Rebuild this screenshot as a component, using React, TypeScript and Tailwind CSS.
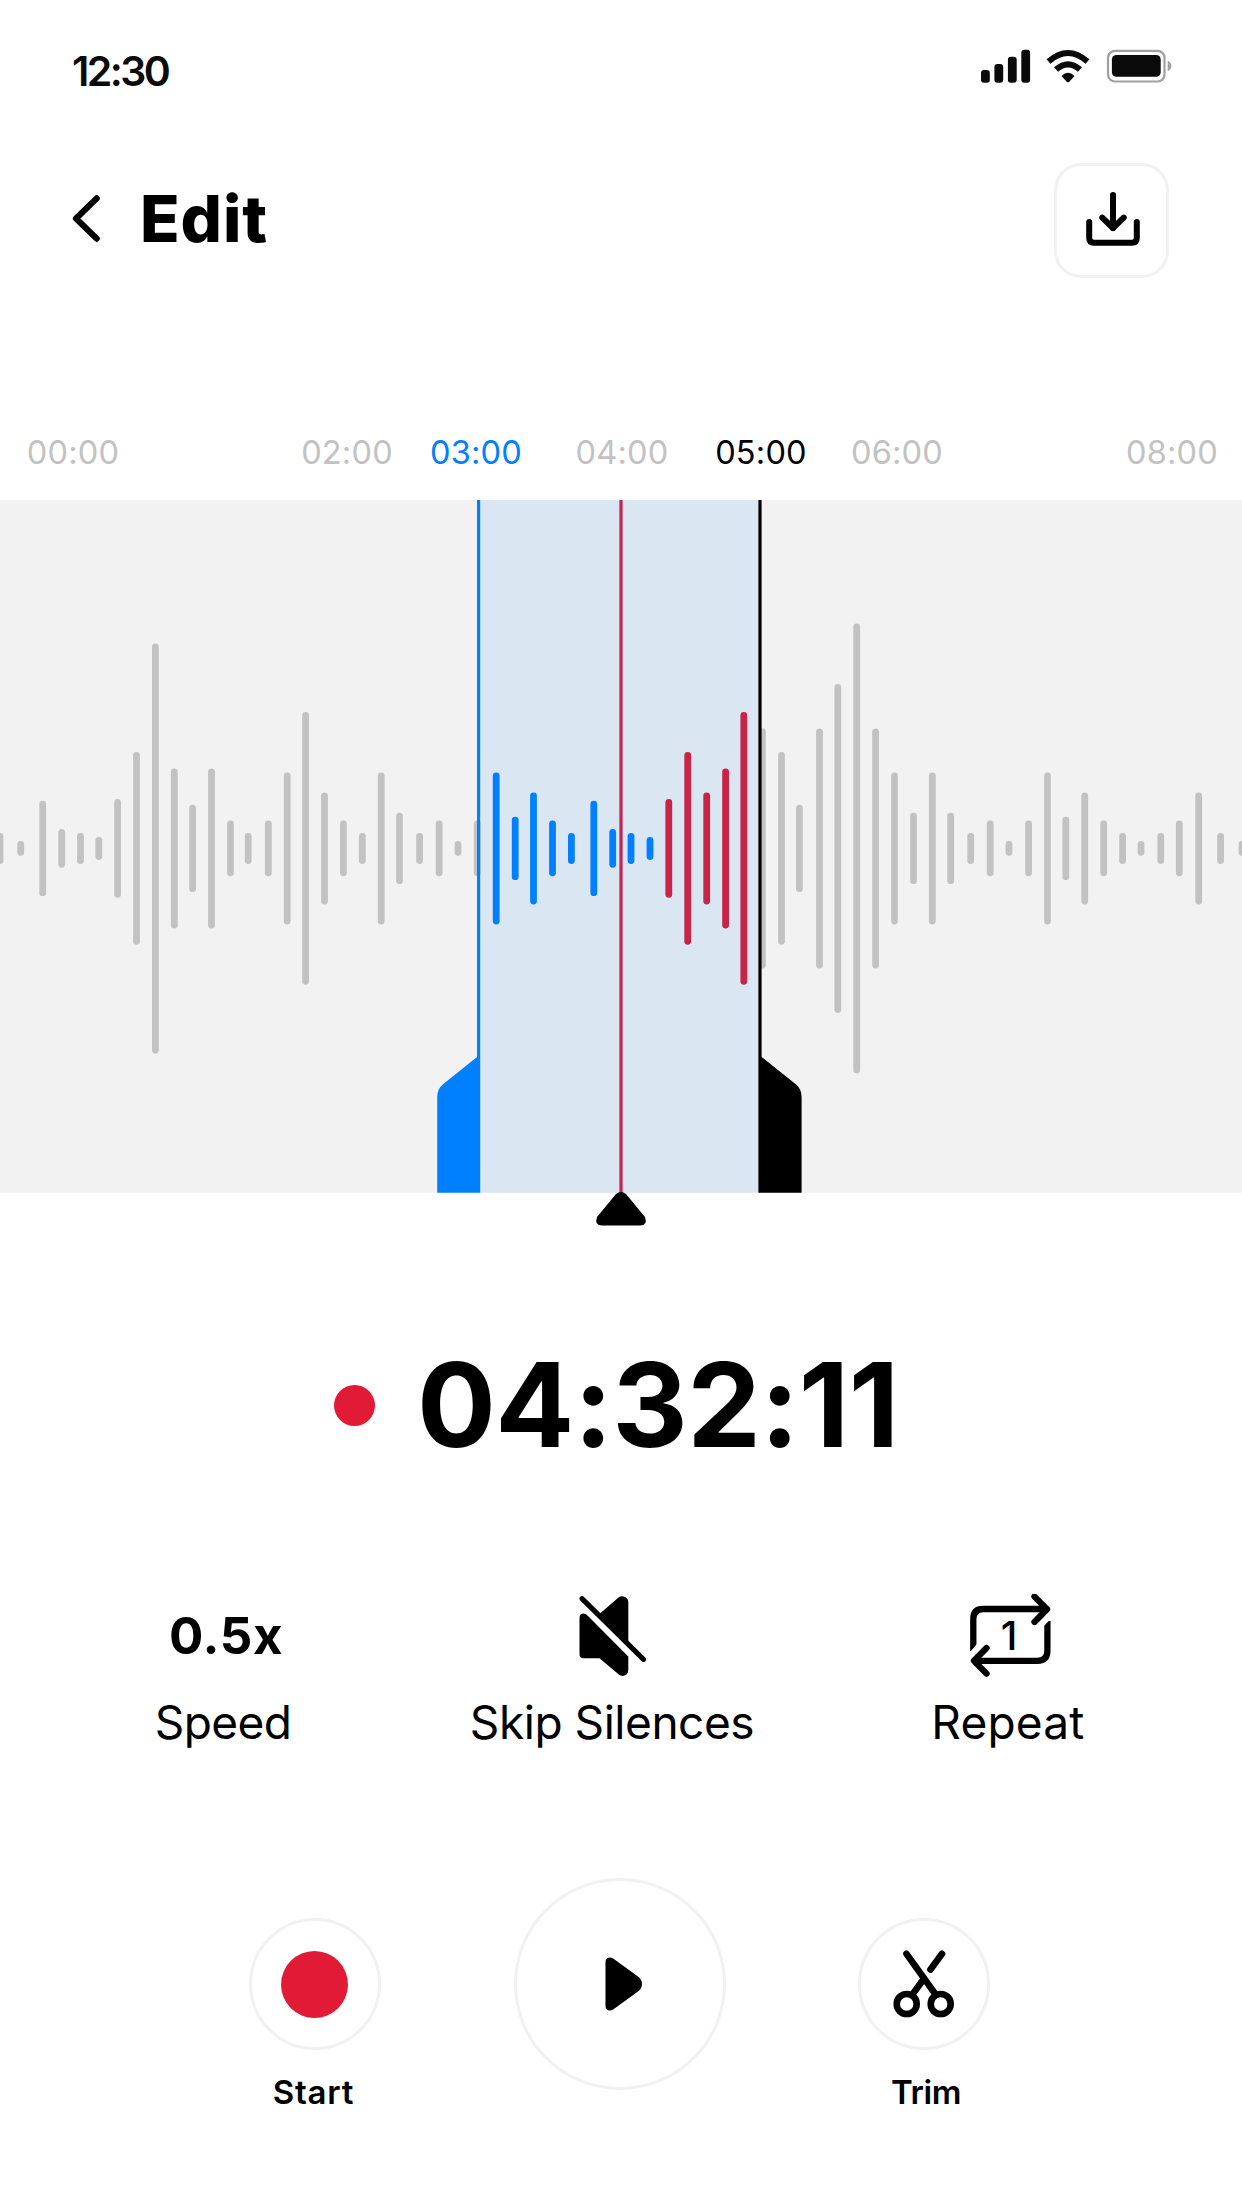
import { useState } from 'react';

// Ruler labels, ml is the gap to the previous label
const marks = [
  { label: "00:00", className: "ml-[23px] text-[#c2c2c2]" },
  { label: "02:00", className: "ml-[174px] text-[#c2c2c2]" },
  { label: "03:00", className: "ml-[29px] text-[#0080ff]" },
  { label: "04:00", className: "ml-[46px] text-[#c2c2c2]" },
  { label: "05:00", className: "ml-[39px] text-black" },
  { label: "06:00", className: "ml-[36px] text-[#c2c2c2]" },
  { label: "08:00", className: "ml-[175px] text-[#c2c2c2]" }
];

// [x, amplitude]
const bars: [number, number][] = [
  [0, 15.5], [20.7, 7.3], [42.7, 47.7], [61.7, 19.3], [80.5, 15.5], [98.8, 11.5], [117.6, 49.3],
  [136.5, 96.3], [155.4, 205], [174.3, 80], [192.6, 43.7], [211.5, 80], [230.5, 27.8], [248.2, 15.5],
  [268.3, 27.8], [287.2, 76], [305.6, 136.3], [324.5, 56], [343.4, 27.8], [362.3, 15.5], [381.2, 76],
  [399.5, 35.7], [419.6, 15.5], [439.1, 27.8], [458, 7.3], [477.3, 27.8], [496.2, 76], [515.2, 31.7],
  [533.5, 56], [552.5, 27.8], [571.4, 15.5], [593.8, 47.7], [612.7, 19.3], [631, 15.5], [650, 11.5],
  [668.8, 49.3], [687.7, 96.3], [706.7, 56], [725.6, 80], [743.8, 136.3], [762.4, 120], [781.5, 96.3],
  [799.4, 43.7], [819.5, 120], [837.8, 164.5], [856.7, 225], [875.6, 120], [894.5, 76], [913.5, 35.7],
  [932.3, 76], [950.7, 35.7], [970.7, 15.5], [990.2, 27.8], [1009, 7.3], [1028.6, 27.8], [1047.5, 76],
  [1065.8, 31.7], [1084.7, 56], [1103.7, 27.8], [1122.6, 15.5], [1141, 7.3], [1160.8, 15.5],
  [1179.3, 27.8], [1198.7, 56], [1220.6, 15.5], [1242, 7.3]
];

const barColor = (x: number) => {
  if (x < 480 || x > 760) return "#c2c2c2";
  return x < 660 ? "#0080ff" : "#c72448";
};

function StatusBar() {
  return (
    <div className="flex h-[163px] items-start justify-between pl-[72px] pr-[70px] pt-[49px]">
      <span className="text-[41px] font-semibold leading-[45px] tracking-[-2.6px] text-[#0a0a0a]">12:30</span>
      <svg width="191" height="34" viewBox="0 0 191 34" fill="#0a0a0a">
        <rect x="0" y="21" width="8.8" height="12.7" rx="3" />
        <rect x="13.4" y="15" width="8.8" height="18.7" rx="3" />
        <rect x="26.9" y="7.7" width="8.8" height="26" rx="3" />
        <rect x="40.3" y="0.8" width="8.8" height="32.9" rx="3" />
        <g fill="none" stroke="#0a0a0a" strokeWidth="6">
          <path d="M67.5 12.5Q87 -4.5 106.5 12.5" />
          <path d="M75 20.6Q87 10 99 20.6" />
        </g>
        <path d="M80.5 27Q87 20.5 93.5 27L88.3 32.7Q87 34 85.7 32.7Z" />
        <rect x="127" y="1.8" width="56.5" height="30.7" rx="7" fill="none" stroke="#a0a0a0" strokeWidth="2.2" />
        <rect x="130.9" y="6" width="48.8" height="21.8" rx="4.5" />
        <path d="M186.7 11.8Q190.4 13.5 190.4 17T186.7 22.3Z" fill="#a0a0a0" />
      </svg>
    </div>
  );
}

function Header() {
  return (
    <header className="flex h-[115px] items-center justify-between pl-[72px] pr-[73px]">
      <div className="flex items-center pb-[3px]">
        <button aria-label="Back">
          <svg className="block" width="28" height="50" viewBox="0 0 28 50" fill="none">
            <path d="M24.7 4.4L4 24.5L24.7 44.6" stroke="black" strokeWidth="6.2" strokeLinecap="round" strokeLinejoin="round" />
          </svg>
        </button>
        <h1 className="ml-[40px] text-[65px] font-extrabold leading-[76px] tracking-[0.9px]">Edit</h1>
      </div>
      <button aria-label="Download" className="flex size-[115px] items-center justify-center rounded-[27px] border-[3px] border-[#f1f1f1]">
        <svg className="mb-[3px] ml-[2px]" width="54" height="54" viewBox="0 0 54 54" fill="none" stroke="black" strokeWidth="6" strokeLinecap="round" strokeLinejoin="round">
          <path d="M27 3V36" />
          <path d="M16.3 25.6L27 36L37.7 25.6" />
          <path d="M3.2 30V46Q3.2 50.7 8 50.7H46Q50.8 50.7 50.8 46V30" />
        </svg>
      </button>
    </header>
  );
}

function Waveform() {
  return (
    <svg className="block shrink-0" width="1242" height="727" viewBox="0 0 1242 727">
      <rect width="1242" height="692.7" fill="#f2f2f2" />
      <rect x="479" width="281" height="692.7" fill="#dae6f2" />
      {bars.map(([x, amp]) => (
        <rect key={x} x={x - 3.4} y={348.4 - amp} width="6.8" height={amp * 2} rx="3.4" fill={barColor(x)} />
      ))}

      {/* Playhead */}
      <path d="M621 0V693" stroke="#c22350" strokeWidth="3.2" />
      <path d="M616 694Q621 690 626 694L645 717Q648 725.5 640 725.5H602Q594 725.5 597 717Z" fill="black" />

      {/* Trim handles */}
      <path d="M477 0H480.2V692.7H437.2V597Q437.2 589 443 584.2L477 557Z" fill="#0080ff" />
      <path d="M761.6 0H758.4V692.7H801.6V597Q801.6 589 795.8 584.2L761.6 557Z" fill="black" />
    </svg>
  );
}

function MuteIcon() {
  return (
    <svg width="68" height="82" viewBox="0 0 68 82">
      <path d="M21 18.5L39.5 2.6Q42.5 0.4 45.5 1.8Q49.3 3.7 49.3 7.4V46.5Z" fill="black" />
      <path d="M0.5 22.9Q0.5 18.9 4 18.6Q6.5 18.4 8.5 20.6L49.3 61.5V75Q49.3 79 45.5 80.6Q42.5 81.6 39.5 79.3L20.5 63.2H4.5Q0.5 63.2 0.5 59.4Z" fill="black" />
      <path d="M3 3.6L64.5 64.4" stroke="black" strokeWidth="5" strokeLinecap="round" />
    </svg>
  );
}

function RepeatIcon() {
  return (
    <svg width="82" height="84" viewBox="0 0 82 84" fill="none" stroke="black" strokeWidth="6.3">
      <path d="M3.3 57V25Q3.3 15 13.3 15H76" />
      <path d="M64.5 2.6L77 15.3L64.5 28" strokeLinecap="round" strokeLinejoin="round" />
      <path d="M77.4 27V56.5Q77.4 66.8 67.4 66.8H5" />
      <path d="M16.5 54L4 66.8L16.5 79.6" strokeLinecap="round" strokeLinejoin="round" />
      <path d="M0 58L7 50V58.5Z" fill="white" stroke="none" />
      <path d="M74 32L81.5 24V23H74Z" fill="white" stroke="none" />
      <text x="39" y="55.5" textAnchor="middle" fill="black" stroke="none" fontSize="40" fontWeight="500">1</text>
    </svg>
  );
}

function ScissorsIcon() {
  return (
    <svg width="62" height="68" viewBox="0 0 62 68" fill="none" stroke="black" strokeWidth="6.6" strokeLinecap="round">
      <circle cx="13.7" cy="54" r="10" />
      <circle cx="47.7" cy="54" r="10" />
      <path d="M13.5 3.8L43 45" />
      <path d="M49 3.8L37.5 19.5" />
      <path d="M30 30L19 45" />
    </svg>
  );
}

export default function App() {
  const [playing, setPlaying] = useState<boolean>(false);

  return (
    <div className="flex h-[2208px] w-[1242px] flex-col overflow-hidden bg-white font-['Inter',sans-serif] text-black">
      <StatusBar />
      <Header />

      {/* Ruler */}
      <div className="mt-[155px] flex h-[67px] items-start">
        {marks.map((mark) => (
          <span key={mark.label} className={`w-[100px] shrink-0 text-center text-[32.5px] leading-[40px] tracking-[0.2px] ${mark.className}`}>
            {mark.label}
          </span>
        ))}
      </div>

      <Waveform />

      {/* Timer */}
      <div className="mt-[107px] flex h-[142px] items-center pl-[334px]">
        <span className="size-[41px] shrink-0 rounded-full bg-[#e11a36]" />
        <span className="ml-[42px] text-[117px] font-bold leading-[142px] tracking-[-0.6px]">04:32:11</span>
      </div>

      {/* Tools */}
      <div className="mt-[118px] flex h-[170px] text-[46px] leading-[56px]">
        <div className="ml-[123px] flex w-[200px] flex-col items-center">
          <span className="ml-[6px] flex h-[84px] items-center pb-px text-[51px] font-bold tracking-[0.6px]">0.5x</span>
          <span className="mt-[16px] tracking-[-0.6px]">Speed</span>
        </div>
        <div className="ml-[129px] flex w-[320px] flex-col items-center">
          <span className="ml-[2px] flex h-[84px] items-center"><MuteIcon /></span>
          <span className="mt-[16px] whitespace-nowrap tracking-[-0.45px]">Skip Silences</span>
        </div>
        <div className="ml-[136px] flex w-[200px] flex-col items-center">
          <span className="ml-[5px] flex h-[84px] items-center"><RepeatIcon /></span>
          <span className="mt-[16px] tracking-[0.2px]">Repeat</span>
        </div>
      </div>

      {/* Controls */}
      <div className="mt-[114px] flex items-start text-[32px] font-semibold leading-[40px]">
        <div className="ml-[249px] mt-[40px] flex w-[131px] flex-col items-center">
          <button className="flex size-[132px] items-center justify-center rounded-full border-[3px] border-[#f1f1f1]">
            <span className="size-[67px] rounded-full bg-[#e11a36]" />
          </button>
          <span className="mr-[2px] mt-[22px] text-[33px] tracking-[0.8px]">Start</span>
        </div>
        <button
          aria-label="Play"
          onClick={() => setPlaying(!playing)}
          className="ml-[134px] flex size-[212px] items-center justify-center rounded-full border-[3px] border-[#f1f1f1]"
        >
          <svg className="ml-[8px]" width="38" height="54" viewBox="0 0 38 54">
            <path d="M0.5 5Q0.5 1.5 3.5 0.7Q6 0 8.5 1.7L33 19.5Q37 22.5 37 27T33 34.5L8.5 52.3Q6 54 3.5 53.3Q0.5 52.5 0.5 49Z" fill="black" />
          </svg>
        </button>
        <div className="ml-[132px] mt-[40px] flex w-[132px] flex-col items-center">
          <button aria-label="Trim" className="flex size-[132px] items-center justify-center rounded-full border-[3px] border-[#f1f1f1]">
            <ScissorsIcon />
          </button>
          <span className="ml-[4px] mt-[22px] text-[33px] tracking-[-0.4px]">Trim</span>
        </div>
      </div>
    </div>
  );
}
